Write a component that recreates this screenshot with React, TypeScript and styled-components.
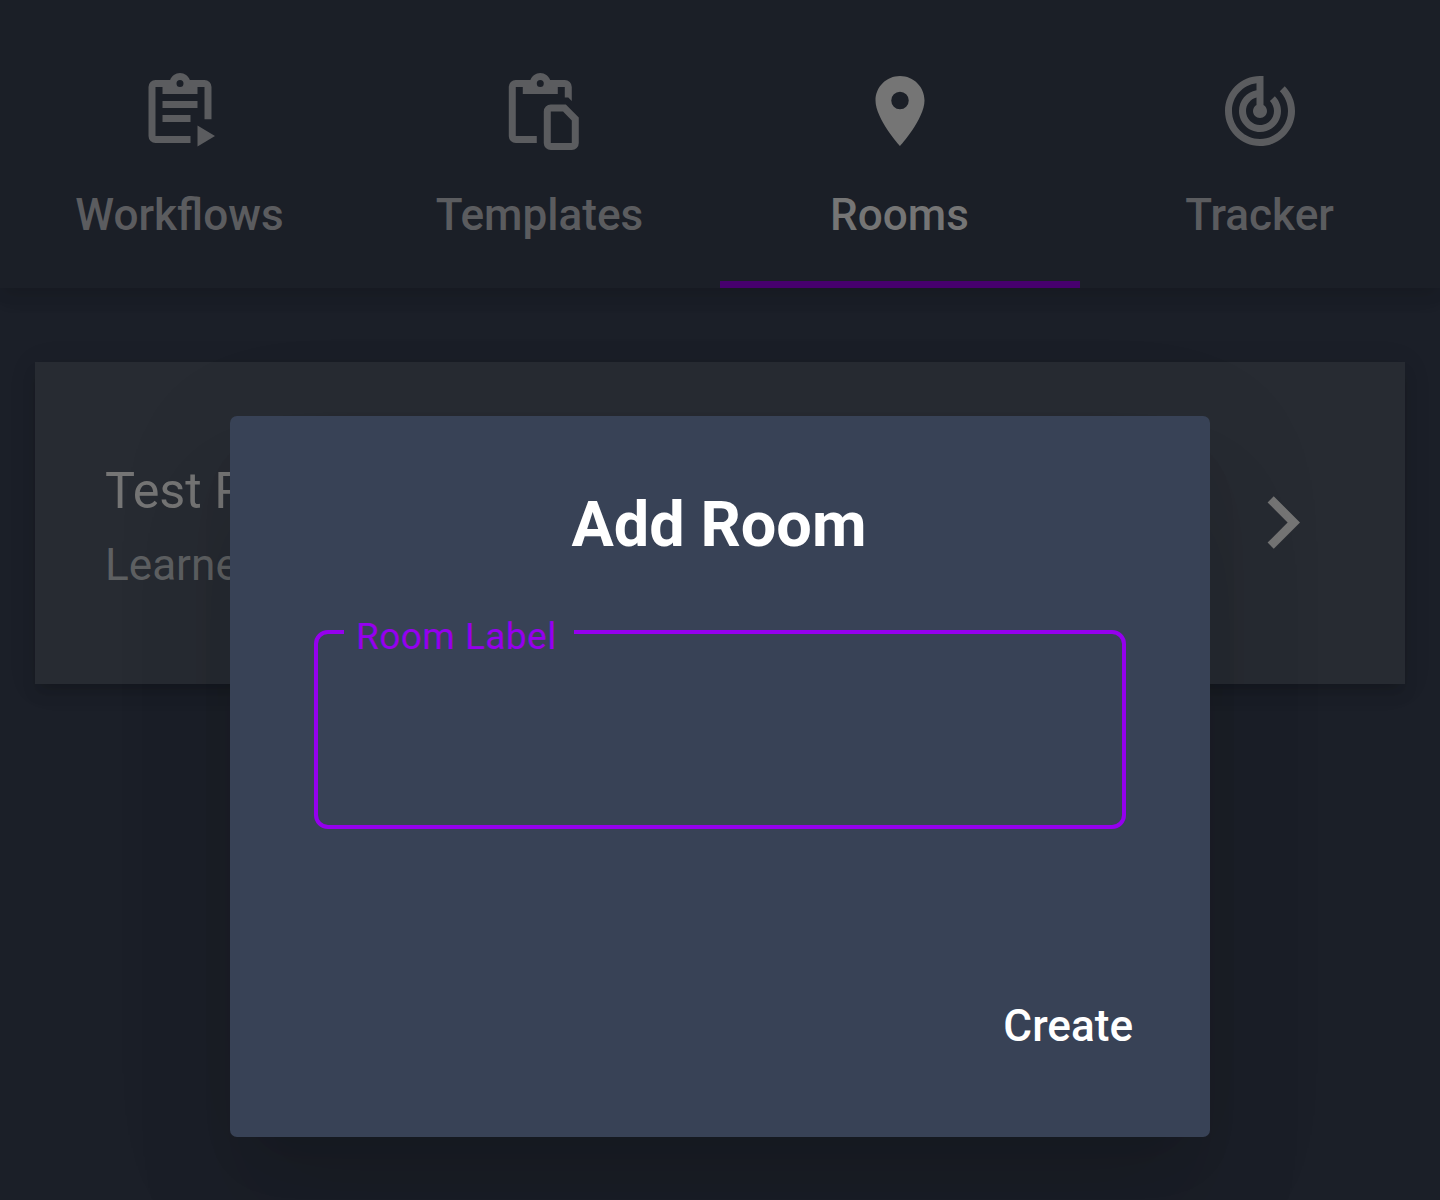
import React from "react";
import styled, { createGlobalStyle } from "styled-components";

const GlobalStyle = createGlobalStyle`
  * { box-sizing: border-box; }
  body {
    margin: 0;
    background: #1b1f28;
    font-family: Roboto, "Noto Sans", sans-serif;
    overflow: hidden;
  }
`;

const Screen = styled.div`
  position: relative;
  display: flex;
  flex-direction: column;
  width: 1440px;
  height: 1200px;
  overflow: hidden;
  background: #1b1f28;
`;

const TabBar = styled.nav`
  display: grid;
  grid-template-columns: repeat(4, 1fr);
  height: 288px;
  background: #1b1f27;
  box-shadow: 0 7px 14px -3px rgba(0, 0, 0, 0.1), 0 14px 17px rgba(0, 0, 0, 0.04),
    0 3px 30px rgba(0, 0, 0, 0.04);
`;

const Tab = styled.button<{ $active?: boolean }>`
  display: flex;
  flex-direction: column;
  align-items: center;
  gap: 35px;
  padding: 69px 0 0;
  border: 0;
  border-bottom: 7px solid ${(p) => (p.$active ? "#47006e" : "transparent")};
  background: none;
  color: ${(p) => (p.$active ? "#757575" : "#5b5c5f")};
  font: 500 44.1px/54px Roboto, sans-serif;
`;

const TabLabel = styled.span`
  padding-right: 1px;
`;

const Icon = styled.svg<{ $size: number }>`
  display: block;
  flex: none;
  width: ${(p) => p.$size}px;
  height: ${(p) => p.$size}px;
  fill: currentColor;
`;

const Content = styled.main`
  padding: 74px 35px 0;
`;

const RoomCard = styled.article`
  display: flex;
  align-items: flex-start;
  justify-content: space-between;
  height: 322px;
  padding: 99px 70px 0;
  background: #272b32;
  color: #757575;
  box-shadow: 0 10px 10px -7px rgba(0, 0, 0, 0.1), 0 10px 14px rgba(0, 0, 0, 0.08),
    0 3px 28px rgba(0, 0, 0, 0.08);
`;

const RoomText = styled.div`
  display: flex;
  flex-direction: column;
  gap: 14px;
`;

const RoomName = styled.div`
  font-size: 50.4px;
  line-height: 60px;
`;

const RoomDetail = styled.div`
  color: #5e6062;
  font-size: 44.1px;
  line-height: 60px;
`;

const CardArrow = styled.span`
  padding-top: 9px;
`;

const Overlay = styled.div`
  position: absolute;
  inset: 0;
  display: flex;
  align-items: flex-start;
  justify-content: center;
  padding-top: 416px;
`;

const Dialog = styled.section`
  display: flex;
  flex-direction: column;
  width: 980px;
  height: 721px;
  padding: 71px 77px 0 84px;
  border-radius: 7px;
  background: #384256;
  box-shadow: 0 38px 52px -24px rgba(0, 0, 0, 0.1), 0 84px 110px 4px rgba(0, 0, 0, 0.07),
    0 31px 125px 18px rgba(0, 0, 0, 0.06);
`;

const Title = styled.h1`
  margin: 0 9px 0 0;
  color: #fff;
  font-size: 63px;
  font-weight: 700;
  line-height: 76px;
  text-align: center;
`;

const Field = styled.fieldset`
  width: 812px;
  height: 208px;
  margin: 58px 0 0;
  padding: 0 0 0 26px;
  border: 4px solid #9500ee;
  border-radius: 14px;
`;

const FieldLabel = styled.legend`
  width: 230px;
  height: 22px;
  padding: 0 0 0 12px;
  color: #9500ee;
  font-size: 37px;
  line-height: 32px;
  letter-spacing: 0.45px;
  white-space: nowrap;
`;

const Actions = styled.div`
  display: flex;
  justify-content: flex-end;
  margin-top: 170px;
`;

const CreateButton = styled.button`
  padding: 0;
  border: 0;
  background: none;
  color: #fff;
  font: 500 44.1px/54px Roboto, sans-serif;
`;

const CLIP_TOP =
  "M12 3a1 1 0 1 1 0 2a1 1 0 0 1 0-2M19 3h-4.18C14.4 1.84 13.3 1 12 1S9.6 1.84 9.18 3H5a2 2 0 0 0-2 2v14a2 2 0 0 0 2 2";

const tabs = [
  {
    label: "Workflows",
    viewBox: "0 -0.13 24 24",
    path: `${CLIP_TOP}h10v-2H5V5h2v2h10V5h2v9.2h2V5a2 2 0 0 0-2-2M7 9h10v2H7zM7 13h8v2H7zM17 16l5 3l-5 3z`,
  },
  {
    label: "Templates",
    viewBox: "-0.08 -0.13 24 24",
    path: `${CLIP_TOP}h6v-2H5V5h2v2h10V5h2v3h1l1 1V5a2 2 0 0 0-2-2M19.3 10H15a2 2 0 0 0-2 2v9a2 2 0 0 0 2 2h6a2 2 0 0 0 2-2v-7.3zM21 21h-6v-9h3.5l2.5 2.6z`,
  },
  {
    label: "Rooms",
    active: true,
    viewBox: "0 0 24 24",
    path: "M12 2C8.13 2 5 5.13 5 9c0 5.25 7 13 7 13s7-7.75 7-13c0-3.87-3.13-7-7-7zm0 9.5a2.5 2.5 0 0 1 0-5a2.5 2.5 0 0 1 0 5z",
  },
  {
    label: "Tracker",
    viewBox: "0 0 24 24",
    path: "M19.07 4.93l-1.41 1.41C19.1 7.79 20 9.79 20 12c0 4.42-3.58 8-8 8s-8-3.58-8-8c0-4.08 3.05-7.44 7-7.93v2.02C8.16 6.57 6 9.03 6 12c0 3.31 2.69 6 6 6s6-2.69 6-6c0-1.66-.67-3.16-1.76-4.24l-1.41 1.41C15.55 9.9 16 10.9 16 12c0 2.21-1.79 4-4 4s-4-1.79-4-4c0-1.86 1.28-3.41 3-3.86v2.14c-.6.35-1 .98-1 1.72 0 1.1.9 2 2 2s2-.9 2-2c0-.74-.4-1.38-1-1.72V2h-1C6.48 2 2 6.48 2 12s4.48 10 10 10 10-4.48 10-10c0-2.76-1.12-5.26-2.93-7.07z",
  },
];

export default function App() {
  return (
    <>
      <GlobalStyle />
      <Screen>
        <TabBar>
          {tabs.map((tab) => (
            <Tab key={tab.label} $active={tab.active}>
              <Icon $size={84} viewBox={tab.viewBox}>
                <path fillRule="evenodd" d={tab.path} />
              </Icon>
              <TabLabel>{tab.label}</TabLabel>
            </Tab>
          ))}
        </TabBar>
        <Content>
          <RoomCard>
            <RoomText>
              <RoomName>Test Room</RoomName>
              <RoomDetail>Learners</RoomDetail>
            </RoomText>
            <CardArrow>
              <Icon $size={105} viewBox="0 0 24 24">
                <path d="M10 6L8.59 7.41 13.17 12l-4.58 4.59L10 18l6-6z" />
              </Icon>
            </CardArrow>
          </RoomCard>
        </Content>
        <Overlay>
          <Dialog role="dialog">
            <Title>Add Room</Title>
            <Field>
              <FieldLabel>Room Label</FieldLabel>
            </Field>
            <Actions>
              <CreateButton>Create</CreateButton>
            </Actions>
          </Dialog>
        </Overlay>
      </Screen>
    </>
  );
}
